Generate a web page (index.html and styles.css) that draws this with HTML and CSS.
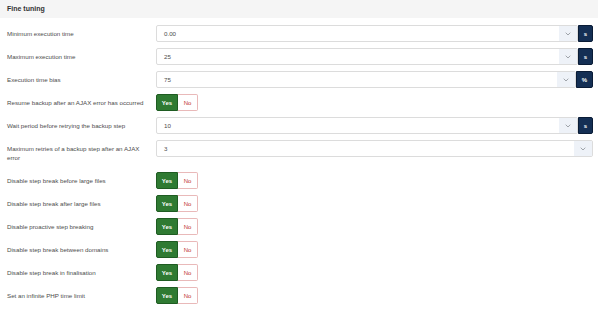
FILE: index.html
```html
<!DOCTYPE html>
<html lang="en">
<head>
  <meta charset="UTF-8">
  <meta name="viewport" content="width=device-width, initial-scale=1.0">
  <title>Fine tuning</title>
  <link rel="stylesheet" href="styles.css">
</head>
<body>
  <div class="card">
    <div class="card-header">Fine tuning</div>
    <div class="card-body">

      <div class="row">
        <label class="row-label">Minimum execution time</label>
        <div class="row-control">
          <div class="input-group">
            <div class="select"><span class="select-value">0.00</span><span class="select-arrow"><svg width="6" height="4" viewBox="0 0 6 4"><path d="M0.7 0.7 L3 3 L5.3 0.7" fill="none" stroke="#8a8f96" stroke-width="0.8"/></svg></span></div>
            <span class="unit">s</span>
          </div>
        </div>
      </div>

      <div class="row">
        <label class="row-label">Maximum execution time</label>
        <div class="row-control">
          <div class="input-group">
            <div class="select"><span class="select-value">25</span><span class="select-arrow"><svg width="6" height="4" viewBox="0 0 6 4"><path d="M0.7 0.7 L3 3 L5.3 0.7" fill="none" stroke="#8a8f96" stroke-width="0.8"/></svg></span></div>
            <span class="unit">s</span>
          </div>
        </div>
      </div>

      <div class="row">
        <label class="row-label">Execution time bias</label>
        <div class="row-control">
          <div class="input-group">
            <div class="select"><span class="select-value">75</span><span class="select-arrow"><svg width="6" height="4" viewBox="0 0 6 4"><path d="M0.7 0.7 L3 3 L5.3 0.7" fill="none" stroke="#8a8f96" stroke-width="0.8"/></svg></span></div>
            <span class="unit">%</span>
          </div>
        </div>
      </div>

      <div class="row">
        <label class="row-label">Resume backup after an AJAX error has occurred</label>
        <div class="row-control">
          <div class="toggle"><span class="toggle-yes">Yes</span><span class="toggle-no">No</span></div>
        </div>
      </div>

      <div class="row">
        <label class="row-label">Wait period before retrying the backup step</label>
        <div class="row-control">
          <div class="input-group">
            <div class="select"><span class="select-value">10</span><span class="select-arrow"><svg width="6" height="4" viewBox="0 0 6 4"><path d="M0.7 0.7 L3 3 L5.3 0.7" fill="none" stroke="#8a8f96" stroke-width="0.8"/></svg></span></div>
            <span class="unit">s</span>
          </div>
        </div>
      </div>

      <div class="row">
        <label class="row-label">Maximum retries of a backup step after an AJAX error</label>
        <div class="row-control">
          <div class="input-group">
            <div class="select"><span class="select-value">3</span><span class="select-arrow"><svg width="6" height="4" viewBox="0 0 6 4"><path d="M0.7 0.7 L3 3 L5.3 0.7" fill="none" stroke="#8a8f96" stroke-width="0.8"/></svg></span></div>
          </div>
        </div>
      </div>

      <div class="row">
        <label class="row-label">Disable step break before large files</label>
        <div class="row-control">
          <div class="toggle"><span class="toggle-yes">Yes</span><span class="toggle-no">No</span></div>
        </div>
      </div>

      <div class="row">
        <label class="row-label">Disable step break after large files</label>
        <div class="row-control">
          <div class="toggle"><span class="toggle-yes">Yes</span><span class="toggle-no">No</span></div>
        </div>
      </div>

      <div class="row">
        <label class="row-label">Disable proactive step breaking</label>
        <div class="row-control">
          <div class="toggle"><span class="toggle-yes">Yes</span><span class="toggle-no">No</span></div>
        </div>
      </div>

      <div class="row">
        <label class="row-label">Disable step break between domains</label>
        <div class="row-control">
          <div class="toggle"><span class="toggle-yes">Yes</span><span class="toggle-no">No</span></div>
        </div>
      </div>

      <div class="row">
        <label class="row-label">Disable step break in finalisation</label>
        <div class="row-control">
          <div class="toggle"><span class="toggle-yes">Yes</span><span class="toggle-no">No</span></div>
        </div>
      </div>

      <div class="row">
        <label class="row-label">Set an infinite PHP time limit</label>
        <div class="row-control">
          <div class="toggle"><span class="toggle-yes">Yes</span><span class="toggle-no">No</span></div>
        </div>
      </div>

    </div>
  </div>
</body>
</html>
```

FILE: styles.css
```css
/* General styles */
body {
  font-family: "Liberation Sans", Arial, sans-serif;
  margin: 0;
  padding: 0;
  background-color: white;
  color: #4d4d4d;
}
.card {
  border-bottom: 1px solid #e8e8e8;
}
.card-header {
  background-color: #f5f5f5;
  height: 18px;
  line-height: 18px;
  padding: 0 7px;
  margin-right: 2px;
  font-size: 7px;
  font-weight: bold;
  color: #333;
}
.card-body {
  display: flex;
  flex-direction: column;
  gap: 6px;
  padding: 7px 7px 13px;
}

/* Form rows */
.row {
  display: flex;
  align-items: flex-start;
}
.row-label {
  flex: none;
  width: 149px;
  box-sizing: border-box;
  padding: 4px 5px 4px 0;
  font-size: 6.2px;
  line-height: 9px;
}
.row-control {
  flex: 1;
  display: flex;
  flex-direction: column;
  align-items: stretch;
}

/* Select with unit */
.input-group {
  display: flex;
  height: 17px;
}
.select {
  flex: 1;
  display: flex;
  border: 1px solid #dcdcdc;
  border-radius: 2px;
  background-color: white;
  overflow: hidden;
}
.select-value {
  flex: 1;
  padding-left: 7px;
  font-size: 6.2px;
  line-height: 15px;
}
.select-arrow {
  width: 18px;
  display: flex;
  align-items: center;
  justify-content: center;
  background-color: #eef2f8;
}
.unit {
  display: flex;
  align-items: center;
  padding: 0 5px;
  background-color: #142f54;
  border: 1px solid #0a1c36;
  border-radius: 0 2px 2px 0;
  color: white;
  font-size: 6px;
  font-weight: bold;
}

/* Yes / No switch */
.toggle {
  display: flex;
  align-self: flex-start;
  height: 17px;
  font-size: 6px;
}
.toggle span {
  display: flex;
  align-items: center;
  justify-content: center;
  box-sizing: border-box;
}
.toggle-yes {
  width: 22px;
  background-color: #2f7a32;
  border: 1px solid #1f5c22;
  border-radius: 2px 0 0 2px;
  color: white;
  font-weight: bold;
}
.toggle-no {
  width: 20px;
  background-color: white;
  border: 1px solid #e9b9b9;
  border-left: none;
  border-radius: 0 2px 2px 0;
  color: #c0302d;
}
```
